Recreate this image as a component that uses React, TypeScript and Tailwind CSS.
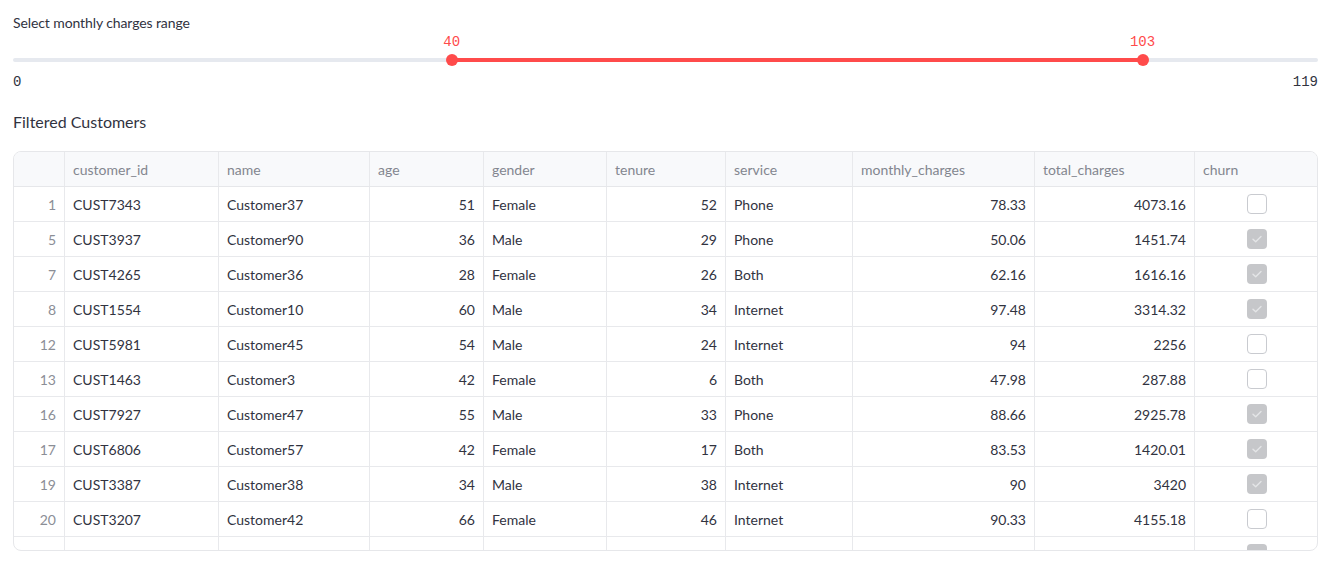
import React from 'react';

type Row = {
  idx: number;
  id: string;
  name: string;
  age: number;
  gender: string;
  tenure: number;
  service: string;
  monthly: string;
  total: string;
  churn: boolean;
};

const rows: Row[] = [
  { idx: 1, id: 'CUST7343', name: 'Customer37', age: 51, gender: 'Female', tenure: 52, service: 'Phone', monthly: '78.33', total: '4073.16', churn: false },
  { idx: 5, id: 'CUST3937', name: 'Customer90', age: 36, gender: 'Male', tenure: 29, service: 'Phone', monthly: '50.06', total: '1451.74', churn: true },
  { idx: 7, id: 'CUST4265', name: 'Customer36', age: 28, gender: 'Female', tenure: 26, service: 'Both', monthly: '62.16', total: '1616.16', churn: true },
  { idx: 8, id: 'CUST1554', name: 'Customer10', age: 60, gender: 'Male', tenure: 34, service: 'Internet', monthly: '97.48', total: '3314.32', churn: true },
  { idx: 12, id: 'CUST5981', name: 'Customer45', age: 54, gender: 'Male', tenure: 24, service: 'Internet', monthly: '94', total: '2256', churn: false },
  { idx: 13, id: 'CUST1463', name: 'Customer3', age: 42, gender: 'Female', tenure: 6, service: 'Both', monthly: '47.98', total: '287.88', churn: false },
  { idx: 16, id: 'CUST7927', name: 'Customer47', age: 55, gender: 'Male', tenure: 33, service: 'Phone', monthly: '88.66', total: '2925.78', churn: true },
  { idx: 17, id: 'CUST6806', name: 'Customer57', age: 42, gender: 'Female', tenure: 17, service: 'Both', monthly: '83.53', total: '1420.01', churn: true },
  { idx: 19, id: 'CUST3387', name: 'Customer38', age: 34, gender: 'Male', tenure: 38, service: 'Internet', monthly: '90', total: '3420', churn: true },
  { idx: 20, id: 'CUST3207', name: 'Customer42', age: 66, gender: 'Female', tenure: 46, service: 'Internet', monthly: '90.33', total: '4155.18', churn: false },
  { idx: 21, id: 'CUST4518', name: 'Customer61', age: 47, gender: 'Male', tenure: 41, service: 'Internet', monthly: '85.12', total: '3489.92', churn: true },
];

const cols = 'grid grid-cols-[51px_154px_151px_114px_123px_119px_127px_182px_160px_124px] h-[35px]';
const cell = 'h-full flex items-center px-2 border-r border-[#e8e9ec] last:border-r-0';

function Checkbox({ checked }: { checked: boolean }) {
  if (checked) {
    return (
      <div className="w-5 h-5 rounded-[4px] bg-[#c6c7ca] flex items-center justify-center">
        <svg width="14" height="14" viewBox="0 0 14 14" fill="none">
          <path d="M3 7.2l2.7 2.6L11 4.4" stroke="#e4e5e7" strokeWidth="1.4" strokeLinecap="round" strokeLinejoin="round" />
        </svg>
      </div>
    );
  }
  return <div className="w-5 h-5 rounded-[4px] bg-white border border-[#c9cbd0]" />;
}

function RangeSlider({ min, max, lo, hi }: { min: number; max: number; lo: number; hi: number }) {
  const pLo = ((lo - min) / (max - min)) * 100;
  const pHi = ((hi - min) / (max - min)) * 100;
  return (
    <div className="relative h-[62px]">
      <div className="absolute left-0 right-0 top-[25px] h-1 rounded-full bg-[#e6e9ef]" />
      <div className="absolute top-[25px] h-1 bg-[#ff4b4b]" style={{ left: `${pLo}%`, width: `${pHi - pLo}%` }} />
      {[{ p: pLo, v: lo }, { p: pHi, v: hi }].map((t) => (
        <div key={t.v} className="absolute top-0" style={{ left: `${t.p}%` }}>
          <div className="absolute -translate-x-1/2 top-[-1px] text-[14px] leading-[20px] text-[#ff4b4b] font-['Liberation_Mono',monospace]">{t.v}</div>
          <div className="absolute -translate-x-1/2 top-[21px] w-3 h-3 rounded-full bg-[#ff4b4b]" />
        </div>
      ))}
      <div className="absolute left-0 right-0 top-[39px] flex justify-between text-[14px] leading-[20px] text-[#31333f] font-['Liberation_Mono',monospace]">
        <span>{min}</span>
        <span>{max}</span>
      </div>
    </div>
  );
}

export default function App() {
  const headers = ['', 'customer_id', 'name', 'age', 'gender', 'tenure', 'service', 'monthly_charges', 'total_charges', 'churn'];
  return (
    <div className="min-h-screen bg-white px-[13px] pt-[13px] font-['Lato','Noto_Sans',sans-serif] text-[#31333f]">
      <div className="text-[14px] leading-[20px] tracking-[-0.1px]">Select monthly charges range</div>
      <RangeSlider min={0} max={119} lo={40} hi={103} />
      <div className="mt-[15px] text-[16px] leading-[24px]">Filtered Customers</div>
      <div className="mt-[17px] h-[400px] overflow-hidden rounded-lg border border-[#e6e7ea] text-[14px]">
        <div className={`${cols} bg-[#f8f9fb] border-b border-[#e6e7ea] text-[#83868f]`}>
          {headers.map((h, i) => (
            <div key={i} className={cell}>{h}</div>
          ))}
        </div>
        {rows.map((r) => (
          <div key={r.idx} className={`${cols} border-b border-[#e8e9ec]`}>
            <div className={`${cell} justify-end text-[#8b8e96]`}>{r.idx}</div>
            <div className={cell}>{r.id}</div>
            <div className={cell}>{r.name}</div>
            <div className={`${cell} justify-end`}>{r.age}</div>
            <div className={cell}>{r.gender}</div>
            <div className={`${cell} justify-end`}>{r.tenure}</div>
            <div className={cell}>{r.service}</div>
            <div className={`${cell} justify-end`}>{r.monthly}</div>
            <div className={`${cell} justify-end`}>{r.total}</div>
            <div className={`${cell} justify-center`}>
              <Checkbox checked={r.churn} />
            </div>
          </div>
        ))}
      </div>
    </div>
  );
}
